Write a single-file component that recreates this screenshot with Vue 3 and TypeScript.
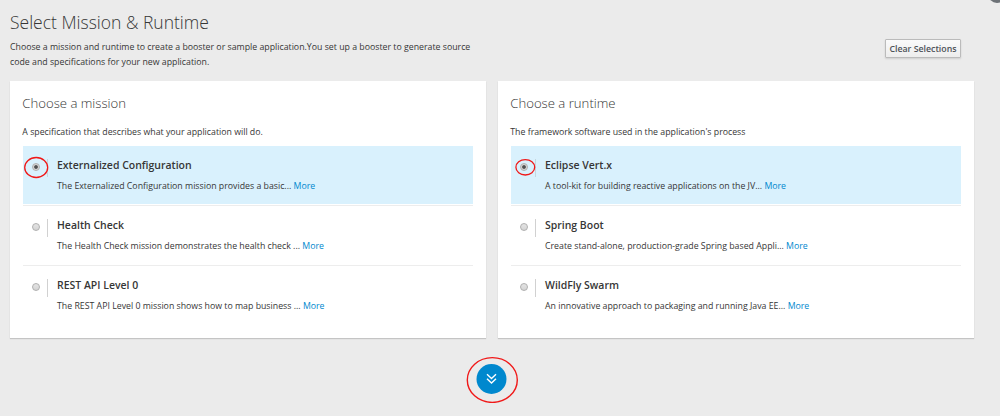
<script setup lang="ts">
interface Option {
  name: string
  text: string
}

interface Panel {
  id: string
  title: string
  hint: string
  options: Option[]
}

const panels: Panel[] = [
  {
    id: 'mission',
    title: 'Choose a mission',
    hint: 'A specification that describes what your application will do.',
    options: [
      { name: 'Externalized Configuration', text: 'The Externalized Configuration mission provides a basic...' },
      { name: 'Health Check', text: 'The Health Check mission demonstrates the health check ...' },
      { name: 'REST API Level 0', text: 'The REST API Level 0 mission shows how to map business ...' },
    ],
  },
  {
    id: 'runtime',
    title: 'Choose a runtime',
    hint: "The framework software used in the application's process",
    options: [
      { name: 'Eclipse Vert.x', text: 'A tool-kit for building reactive applications on the JV...' },
      { name: 'Spring Boot', text: 'Create stand-alone, production-grade Spring based Appli...' },
      { name: 'WildFly Swarm', text: 'An innovative approach to packaging and running Java EE...' },
    ],
  },
]
</script>

<template>
  <main class="page">
    <span class="corner"></span>
    <header class="head">
      <div>
        <h1>Select Mission &amp; Runtime</h1>
        <p class="intro">
          Choose a mission and runtime to create a booster or sample application.You set up a booster to generate source<br />
          code and specifications for your new application.
        </p>
      </div>
      <button class="clear" type="button">Clear Selections</button>
    </header>

    <div class="panels">
      <section v-for="panel in panels" :key="panel.id" class="panel" :class="panel.id">
        <h2>{{ panel.title }}</h2>
        <p class="hint">{{ panel.hint }}</p>
        <ul>
          <li v-for="(option, i) in panel.options" :key="option.name" :class="{ selected: i === 0 }">
            <div class="pick">
              <span class="radio"></span>
              <svg v-if="i === 0" class="ring" viewBox="0 0 26 24">
                <ellipse v-if="panel.id === 'mission'" cx="13.2" cy="12.5" rx="11.5" ry="10" />
                <ellipse v-else cx="14.3" cy="12.3" rx="9.4" ry="7.7" />
              </svg>
            </div>
            <div class="body">
              <h3>{{ option.name }}</h3>
              <p>{{ option.text }} <a>More</a></p>
            </div>
          </li>
        </ul>
      </section>
    </div>

    <footer class="foot">
      <svg width="54" height="48" viewBox="0 0 54 48">
        <circle cx="26.5" cy="24" r="15" fill="#0088ce" />
        <path d="M22 19.3l4.5 4.3 4.5-4.3M22 23.8l4.5 4.3 4.5-4.3" fill="none" stroke="#fff" stroke-width="1.4" />
        <ellipse cx="27.3" cy="25" rx="25" ry="22.4" fill="none" stroke="#f01818" stroke-width="1.4" />
      </svg>
    </footer>
  </main>
</template>

<style>
body {
  margin: 0;
  background: #ebebeb;
}
</style>

<style scoped>
.page {
  position: relative;
  box-sizing: border-box;
  width: 1000px;
  height: 416px;
  padding: 0 26px 0 10px;
  overflow: hidden;
  background: #ebebeb;
  color: #363636;
  font-family: "Open Sans", "Noto Sans", sans-serif;
  font-size: 8.78px;
}
h1, h2, h3, p, ul {
  margin: 0;
  padding: 0;
  font-weight: 400;
}
.corner {
  position: absolute;
  top: -15px;
  left: 988px;
  width: 18px;
  height: 18px;
  border-radius: 50%;
  background: #6d7277;
}
.head {
  display: flex;
  justify-content: space-between;
  height: 81px;
}
h1 {
  padding-top: 10px;
  font-size: 17.5px;
  font-weight: 300;
  line-height: 25px;
  white-space: nowrap;
}
.intro {
  padding-top: 5px;
  line-height: 14.8px;
  white-space: nowrap;
}
.clear {
  box-sizing: border-box;
  width: 76px;
  height: 19px;
  margin: 39px 13px 0 0;
  padding: 0;
  border: 1px solid #bbb;
  border-radius: 1px;
  background: linear-gradient(#fafafa, #ededed);
  box-shadow: 0 1px 2px rgba(3, 3, 3, 0.12);
  color: #4d5258;
  font: 600 8.78px/18px "Open Sans", sans-serif;
  white-space: nowrap;
}
.panels {
  display: grid;
  grid-template-columns: 475.6px 475.6px;
  gap: 12.4px;
}
.panel {
  box-sizing: border-box;
  height: 256.5px;
  padding: 0 13px;
  background: #fff;
  box-shadow: 0 1px 1px rgba(3, 3, 3, 0.17);
}
h2 {
  margin-left: -0.7px;
  padding-top: 12px;
  font-size: 13.15px;
  font-weight: 300;
  line-height: 20px;
}
.hint {
  margin-left: -0.7px;
  padding-top: 12px;
  height: 21px;
  line-height: 15px;
}
ul {
  list-style: none;
}
li {
  box-sizing: border-box;
  display: flex;
  height: 60px;
  border-bottom: 1px solid #ededed;
}
li:last-child {
  border-bottom: 0;
}
.selected {
  background: #d9f1fd;
  background-clip: content-box;
  padding-bottom: 1px;
}
.pick {
  position: relative;
  box-sizing: border-box;
  flex: none;
  width: 25px;
  height: 18px;
  margin-top: 13px;
  border-right: 1px solid #d1d1d1;
}
.selected .pick {
  border-color: #c5d6de;
}
.radio {
  display: block;
  box-sizing: border-box;
  width: 8px;
  height: 8px;
  margin: 4px 0 0 9px;
  border: 1px solid #b0b0b0;
  border-radius: 50%;
  background: linear-gradient(#e4e4e4, #d4d4d4);
}
.selected .radio {
  background: radial-gradient(circle, #505050 0 1.4px, #d6d6d6 2.3px);
}
.ring {
  position: absolute;
  top: -4px;
  left: 0;
  width: 26px;
  height: 24px;
  fill: none;
  stroke: #f01818;
  stroke-width: 1.3;
}
.body {
  padding-left: 9px;
  white-space: nowrap;
}
h3 {
  padding-top: 11px;
  font-size: 10.47px;
  font-weight: 600;
  line-height: 16px;
}
.body p {
  padding-top: 6px;
  line-height: 15px;
}
a {
  color: #0088ce;
}
.foot {
  display: flex;
  padding: 17.5px 0 0 455px;
}
</style>
